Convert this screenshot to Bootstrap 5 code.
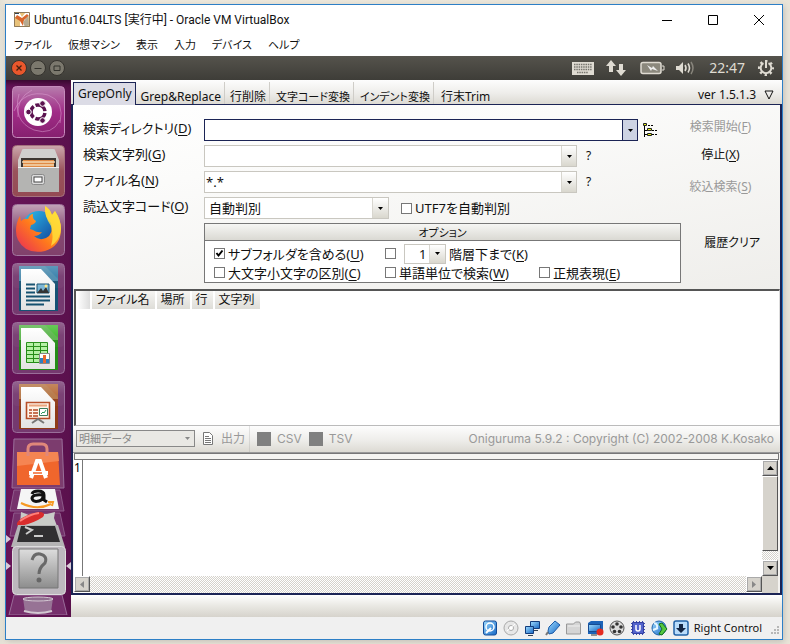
<!DOCTYPE html>
<html lang="ja">
<head>
<meta charset="utf-8">
<meta name="viewport" content="width=device-width, initial-scale=1">
<title>Ubuntu16.04LTS [実行中] - Oracle VM VirtualBox</title>
<link href="https://cdn.jsdelivr.net/npm/bootstrap@5.3.0/dist/css/bootstrap.min.css" rel="stylesheet">
<style>
:root{--navy:#1b2455;--bar:linear-gradient(#fdfdfd,#eeedea 55%,#dcdad3)}
body{background:linear-gradient(90deg,#e4e1d6,#efe9dc 8px,#e9e4d8);color:#111;font:13px/18px "Noto Sans","Noto Sans CJK JP",sans-serif;font-feature-settings:"palt";min-height:100vh;padding:4px 7px 4px 5px}
button,input,select{font:inherit;font-feature-settings:inherit;color:inherit}
button{background:none;border:0;padding:0}
svg{display:block;flex:none}
u{text-underline-offset:2px}
.vm-window{border:1px solid #2d7fc6;background:#fff;box-shadow:1px 2px 6px #8886;flex:1;min-width:0}
.title-bar{height:29px;padding:0 17px 0 8px;font-size:12px;font-family:Roboto,"Noto Sans CJK JP",sans-serif}
.win-controls{gap:34px}
.menu-bar{height:22px;padding:0 8px;gap:16px;font-size:11px}
.menu-bar a{color:#111;text-decoration:none}
.panel-bar{height:24px;background:linear-gradient(#55534c,#3e3d38);color:#dfdbd2;padding:0 7px 0 5px;font-size:14px}
.window-dots{gap:3px}
.launcher{width:65px;padding:6px 0 0;background:#5d1250;background:linear-gradient(90deg,#681458,#5a114d);box-shadow:inset 0 8px 6px -6px #2a0624;gap:7px}
.app-pane{min-width:0;background:#f3f2ef}
.tab-bar{height:25px;background:var(--bar);border-bottom:1px solid var(--navy);font-size:12px;padding-left:2px;padding-top:2px}
.tab-bar button{padding:6px 3px 0 6px;border-right:1px solid #cfcdc8;background-clip:padding-box}
.tab-bar button+button{padding-left:5px}
.tab-bar .kana-tab{font-size:11px;padding-left:6px}
.tab-bar .tab-on{background:#dcdce6;border:1px solid var(--navy);border-bottom:0;padding:2px 3px 2px 4px;margin-bottom:-1px}
.tab-bar button:last-of-type{border:0;padding-left:7px}
.pane-frame{border:solid var(--navy);border-width:0 2px 2px;min-height:0}
.search-form{background:linear-gradient(170deg,#fff,#fbfbfa 30%,#efeeeb);padding:14px 20px 6px 10px}
.form-lines{display:grid;gap:4px;min-width:0}
.line{display:flex;align-items:stretch;height:22px}
.line>label:first-child{width:121px;flex:none;line-height:18px}
.combo{display:flex;flex:1;border:1px solid #c9c7c0;background:#fff;min-width:0}
.combo input{border:0;flex:1;min-width:0;padding:0 1px;outline:0;line-height:16px}
.combo button{width:15px;display:grid;place-items:center;background:linear-gradient(#fff,#d9d7ce);border-left:1px solid #d8d6cf}
.combo.hot{border-color:var(--navy)}
.combo.hot button{background:#cdd3e3;border-color:var(--navy)}
.trail{width:104px;padding-left:9px;align-items:center;font-size:12px}
.trail.slim{width:43px;padding-left:4px}
.pick{appearance:none;border:1px solid #c9c7c0;border-radius:0;background:url("data:image/svg+xml,%3Csvg xmlns='http://www.w3.org/2000/svg' width='5' height='3'%3E%3Cpath d='M0 0h5L2.500 3z'/%3E%3C/svg%3E") right 5px center no-repeat,linear-gradient(90deg,#d8d6cf 1px,transparent 1px) right/16px 100% no-repeat,linear-gradient(#fff,#d9d7ce) right/16px 100% no-repeat,#fff}
.encoding{width:185px;padding:0 4px;line-height:18px}
.depth{width:42px;height:20px;padding:0 0 0 14px;line-height:18px;margin:0 3px 0 8px}
.tick{appearance:none;width:11px;height:11px;border:1px solid #777;background:#fff;margin:0 3px 0 0;flex:none}
.tick:checked{background:#fff url("data:image/svg+xml,%3Csvg xmlns='http://www.w3.org/2000/svg' viewBox='0 0 9 9'%3E%3Cpath d='M1.500 4l2 2.500 4-5' fill='none' stroke='%23000' stroke-width='2'/%3E%3C/svg%3E") center/9px}
.option-box{border:1px solid #777;background:#fff;height:60px;margin-left:121px}
.option-title{height:17px;border-bottom:1px solid #777;background:linear-gradient(#f6f6f4,#dad9d3);text-align:center;font-size:11px;line-height:17px}
.option-grid{display:grid;grid-template-columns:171px 154px 1fr;grid-auto-rows:19px;padding:3px 9px}
.action-col{width:79px;font-size:12px}
.action-col button{line-height:16px}
.action-col button:disabled{color:#999}
.sheet{background:#fff;flex:1 1 0;min-height:120px}
.result-list{border:solid #555;border-width:2px 1px 1px 2px;border-right-color:#ddd;border-bottom-color:#bbb;margin-left:1px}
.result-list table{margin-left:1px;border-collapse:separate;border-spacing:0;font-size:12px}
.result-list th{font-weight:400;background:linear-gradient(#f6f5f3,#deddd8);padding:0 5px 0 4px;border-right:2px solid #fff;line-height:18px;white-space:nowrap}
.result-list th:first-child{width:15px;background:linear-gradient(90deg,#fff,#ddd)}
.export-bar{height:27px;background:var(--bar);color:#999;padding:0 6px 0 3px;border-bottom:1px solid #999;font-size:12px}
.latin-note{font-family:Inter,"Noto Sans",sans-serif}
.detail{width:119px;height:17px;line-height:15px;border:1px solid #888;border-radius:0;appearance:none;padding:0 2px;opacity:1;color:#888!important;background:url("data:image/svg+xml,%3Csvg xmlns='http://www.w3.org/2000/svg' width='5' height='3'%3E%3Cpath d='M0 0h5L2.500 3z' fill='%23888'/%3E%3C/svg%3E") right 4px center no-repeat,#e9e8e4;font-size:11px}
.swatch{appearance:none;width:14px;height:14px;background:#808080;margin:0 6px 0 7px}
.splitter{height:7px;border:1px solid #777;background:#f5f4f1;margin:0 1px}
.editor{margin:0 2px 0 1px;display:grid;grid-template:1fr 17px/9px 1fr 16px}
.gutter{border-right:1px solid #777;font-size:12px;line-height:15px;color:#000}
.editor textarea{border:0;resize:none;outline:0;width:100%;height:100%;padding:0 2px}
.dither{background:conic-gradient(#d5d2cb 25%,#fff 0 50%,#d5d2cb 0 75%,#fff 0) 0 0/2px 2px}
.scroll-btn{width:16px;height:16px;background:#d6d3cc;border:1px solid;border-color:#fff #555 #555 #fff;box-shadow:0 0 0 1px #aaa inset;display:grid;place-items:center;flex:none}
.thumb{background:#d6d3cc;border:1px solid;border-color:#fff #555 #555 #fff;height:75px}
.hscroll{grid-column:1/3}
.scroll-corner{background:#d6d3cc}
.bottom-strip{height:22px;background:linear-gradient(#fff,#e9e8e3 50%,#d6d3cc)}
.status-bar{height:22px;background:#f0f0f0;padding-right:2px;gap:5px;font-size:11px}
.app-stack{margin-top:-2px}
</style>
</head>
<body class="d-flex">
<svg width="0" height="0" class="position-absolute" aria-hidden="true">
<defs>
<linearGradient id="gloss" x2="0" y2="1"><stop stop-color="#fff" stop-opacity=".55"/><stop offset=".5" stop-color="#fff" stop-opacity=".12"/><stop offset="1" stop-color="#fff" stop-opacity=".08"/></linearGradient>
<linearGradient id="steel" x2="0" y2="1"><stop stop-color="#ddd"/><stop offset="1" stop-color="#8d8d8d"/></linearGradient>
<linearGradient id="dash" x2="0" y2="1"><stop stop-color="#b77dad"/><stop offset=".5" stop-color="#a12c87"/><stop offset="1" stop-color="#86206f"/></linearGradient>
<linearGradient id="fire" x1="0" y1="1" x2="1" y2="0"><stop stop-color="#e8285a"/><stop offset=".45" stop-color="#ff7a1c"/><stop offset="1" stop-color="#ffe93a"/></linearGradient>
<linearGradient id="blue" x2="1" y2="1"><stop stop-color="#2cc2f0"/><stop offset="1" stop-color="#123a92"/></linearGradient>
<linearGradient id="page" x2="0" y2="1"><stop stop-color="#fff"/><stop offset="1" stop-color="#e2e2e2"/></linearGradient>
<linearGradient id="vblue" x2="1" y2="1"><stop stop-color="#9fdcff"/><stop offset="1" stop-color="#1466c4"/></linearGradient>
</defs>
</svg>
<div class="vm-window d-flex flex-column">
  <header class="title-bar d-flex align-items-center">
    <svg width="16" height="17" viewBox="0 0 16 17"><path d="M0 1h16v15H0z" fill="#e8c27a"/><path d="M0 1h5l3 5 4-5h4v3l-6 8 1 4H6V9L0 5z" fill="#fff"/><path d="M3 4l5 3 5-4 2 2-5 4-1 6-3-5-5-3z" fill="#d9652a"/><path d="M0 1h5v2H0z" fill="#345"/><path d="M9 11l5-6 1 9-4 2z" fill="#b5aa92"/><path d="M.5 1.500h15v14H.5z" fill="none" stroke="#8f7a5a"/></svg>
    <span class="ps-1 flex-grow-1">Ubuntu16.04LTS [実行中] - Oracle VM VirtualBox</span>
    <span class="win-controls d-flex">
      <button aria-label="最小化"><svg width="12" height="12"><path d="M1 6.500h10" stroke="#000"/></svg></button>
      <button aria-label="最大化"><svg width="12" height="12"><path d="M1.500 1.500h9v9h-9z" fill="none" stroke="#000"/></svg></button>
      <button aria-label="閉じる"><svg width="12" height="12"><path d="M1 1l10 10M11 1L1 11" stroke="#000"/></svg></button>
    </span>
  </header>
  <nav class="menu-bar d-flex align-items-center"><a href="#">ファイル</a><a href="#">仮想マシン</a><a href="#">表示</a><a href="#">入力</a><a href="#">デバイス</a><a href="#">ヘルプ</a></nav>
  <div class="panel-bar d-flex align-items-center">
    <div class="window-dots d-flex flex-grow-1">
      <button aria-label="閉じる"><svg width="16" height="16"><circle cx="8" cy="8" r="7.500" fill="#e9572c" stroke="#35332e"/><path d="M5.500 5.500l5 5m0-5l-5 5" stroke="#46200f" stroke-width="1.300"/></svg></button>
      <button aria-label="最小化"><svg width="16" height="16"><circle cx="8" cy="8" r="7.500" fill="#7b786d" stroke="#35332e"/><path d="M4.500 8.500h7" stroke="#33322d"/></svg></button>
      <button aria-label="最大化"><svg width="16" height="16"><circle cx="8" cy="8" r="7.500" fill="#7b786d" stroke="#35332e"/><path d="M5 6h6v4.500H5z" fill="none" stroke="#33322d"/></svg></button>
    </div>
    <svg width="22" height="13"><path d="M0 0h22v13H0z" fill="#dfdbd2"/><path d="M2 2.500h18M2 5h18M2 7.500h18M5 10.500h11" stroke="#77756e" stroke-width="1.500" stroke-dasharray="1.500 .8"/></svg>
    <svg class="ms-2 me-2" width="26" height="18" viewBox="0 0 26 18"><path d="M5 1l5 6H7v6H3V7H0zM15 17l-5-6h3V5h4v6h3z" transform="translate(4)" fill="#dfdbd2"/></svg>
    <svg class="ms-1" width="25" height="14"><rect x="1" y="1.500" width="20" height="11" rx="2" fill="#8b887d" stroke="#dfdbd2" stroke-width="1.500"/><path d="M22 5h2v4h-2" fill="none" stroke="#dfdbd2"/><path d="M7 4l5 3 1-2 5 5-6-2-1 2z" fill="#eee"/></svg>
    <svg class="ms-2" width="24" height="16"><path d="M3 6h3l4-4v12l-4-4H3z" fill="#dfdbd2"/><path d="M12 5q2 3 0 6M15 3.500q3 4.500 0 9" fill="none" stroke="#dfdbd2" stroke-width="1.600"/><path d="M18 2q4 6 0 12" fill="none" stroke="#88857c" stroke-width="1.500"/></svg>
    <span class="ms-2 me-2 ps-1 pe-1">22:47</span>
    <svg width="18" height="18" viewBox="-9 -9 18 18"><circle r="6.800" fill="none" stroke="#dfdbd2" stroke-width="2.500" stroke-dasharray="2.300 3.040" stroke-dashoffset="1"/><path d="M-2.500-4.800a5.300 5.300 0 1 0 5 0" fill="none" stroke="#dfdbd2" stroke-width="2"/><path d="M0-8V0" stroke="#dfdbd2" stroke-width="2"/></svg>
  </div>
  <div class="d-flex flex-grow-1">
    <aside class="launcher d-flex flex-column align-items-center flex-shrink-0" aria-label="ランチャー">
      <svg width="53" height="52"><rect x=".5" y=".5" width="52" height="51" rx="4" fill="url(#dash)" stroke="#c58bbb"/><path d="M2 25Q12 3 36 9q17 6 12 28M7 8q-7 27 15 36 18 6 26-10M20 4Q4 12 6 31" fill="none" stroke="#e0a5d5" opacity=".5"/><circle cx="26" cy="26" r="14" fill="#fff"/><circle cx="26" cy="26" r="7" fill="none" stroke="#5c1350" stroke-width="3.500" stroke-dasharray="12.600 2" stroke-dashoffset="-1"/><g fill="#5c1350" stroke="#fff"><circle cx="16.500" cy="26" r="2.800"/><circle cx="30.500" cy="17.500" r="2.800"/><circle cx="30.500" cy="34.500" r="2.800"/></g></svg>
      <svg width="53" height="52"><rect x=".5" y=".5" width="52" height="51" rx="4" fill="#8b3b45" stroke="#a5727e"/><rect x="1" y="1" width="51" height="50" rx="4" fill="url(#gloss)"/><path d="M10 5q0-1 2-1h29q2 0 2 1l4 10v32H6V15z" fill="#d0d0ce"/><path d="M9 13h35v9H9z" fill="#3d3732"/><path d="M11 15h31v7H11z" fill="#e08a45"/><path d="M10 17h33M11 20h31" stroke="#f3d9b2" stroke-width="1.500"/><path d="M6 22h41v25H6z" fill="#b4b4b2"/><path d="M6 22.500h41" stroke="#eee"/><rect x="19.500" y="29.500" width="13" height="10" rx="2" fill="#ddd" stroke="#888"/><rect x="22" y="32" width="8" height="5" fill="#fff" stroke="#444"/></svg>
      <svg width="53" height="52"><rect x=".5" y=".5" width="52" height="51" rx="4" fill="#76305f" stroke="#a277a0"/><rect x="1" y="1" width="51" height="50" rx="4" fill="url(#gloss)"/><circle cx="27" cy="24" r="17" fill="url(#blue)"/><path d="M4 27q0-9 4-15l1 5q3-3 7-2 2-5 5-5-1 5 3 7-1 3-5 4l-1 4 3 1q4 3 9 2-3 4-8 4 5 5 12 2 8-4 5-15Q32 13 33 2q5 3 7 9l3-4q6 9 6 18 0 17-16 22-19 4-27-11-2-4-2-9z" fill="url(#fire)"/><path d="M33 2q5 3 7 9l3-4q6 9 6 18-1 11-10 17 3-9 0-20-7-10-6-20z" fill="#ffe13a" opacity=".8"/></svg>
      <svg width="53" height="52"><rect x=".5" y=".5" width="52" height="51" rx="4" fill="#75396f" stroke="#9a6e9a"/><path d="M7 3h39v45H7z" fill="#155274"/><path d="M7 3h39v15H7z" fill="#4b8bae"/><path d="M9 6h20l14 15v26H9z" fill="url(#page)"/><path d="M33 3h13v13z" fill="#3780ab"/><path d="M14 21.500h9M14 25.500h9M14 29.500h9M14 33.500h24M14 37.500h24M14 41.500h18" stroke="#14506f" stroke-width="2"/><path d="M25 21h12v9H25z" fill="#79b5d6" stroke="#14506f"/><path d="M25 30l4-5 2 3 3-4 3 6z" fill="#333"/><circle cx="34" cy="23" r="1.500" fill="#ffe680"/><rect x="1" y="1" width="51" height="24" rx="4" fill="url(#gloss)" opacity=".4"/></svg>
      <svg width="53" height="52"><rect x=".5" y=".5" width="52" height="51" rx="4" fill="#75396f" stroke="#9a6e9a"/><path d="M7 3h39v45H7z" fill="#248c16"/><path d="M7 3h39v15H7z" fill="#5ab54b"/><path d="M9 6h20l14 15v26H9z" fill="url(#page)"/><path d="M33 3h13v13z" fill="#44bb31"/><path d="M14.500 20.500h21v20h-21zM14 24.500h22M14 28.500h22M14 32.500h22M14 36.500h22M21.500 20v21M28.500 20v21" fill="#b4f0a4" stroke="#248c16"/><path d="M27.500 31.500h10v10h-10z" fill="#fff" stroke="#888"/><path d="M28 36h3v5h-3z" fill="#2d80c2"/><path d="M31 33h3v8h-3z" fill="#e9682d"/><path d="M34 37h3v4h-3z" fill="#2d80c2"/><rect x="1" y="1" width="51" height="24" rx="4" fill="url(#gloss)" opacity=".4"/></svg>
      <svg width="53" height="52"><rect x=".5" y=".5" width="52" height="51" rx="4" fill="#75396f" stroke="#9a6e9a"/><path d="M7 3h39v45H7z" fill="#8f3b17"/><path d="M7 3h39v15H7z" fill="#b57645"/><path d="M9 6h20l14 15v26H9z" fill="url(#page)"/><path d="M33 3h13v13z" fill="#b76b38"/><path d="M14.500 21.500h23v16h-23z" fill="#fff4e8" stroke="#b54a22" stroke-width="1.600"/><path d="M17 24.500h18" stroke="#e9a37a" stroke-width="2"/><path d="M17 29h3M17 32h3M17 35h3M21 29h5M21 32h5M21 35h5" stroke="#b54a22" stroke-width="1.500"/><path d="M27.500 27.500h8v7h-8z" fill="#fff" stroke="#3b7b5b"/><path d="M29 33l2-2 1 1 2-3" fill="none" stroke="#2c9b5c"/><path d="M20 42l6-4 6 4" fill="none" stroke="#777" stroke-width="2"/><rect x="1" y="1" width="51" height="24" rx="4" fill="url(#gloss)" opacity=".4"/></svg>
      <svg class="app-stack" width="65" height="177" viewBox="0 0 65 177"><g stroke="#9a6e9a">
        <path d="M8 1h48l2 49H6z" fill="#7c3c6e"/><path d="M8 52h46l4 21H4zM8 75h46l5 23H4z" fill="#7a3a72" opacity=".8"/><path d="M8 157h48l5 20H3z" fill="#76306c"/></g>
        <path d="M11 14h41l2 33H11z" fill="#f0662c"/><path d="M11 14h41l1 9-42 5z" fill="#f58552"/><path d="M22 18v-7q0-5 5-5h9q5 0 5 5v7" fill="none" stroke="#e0877a" stroke-width="3"/><path d="M25 40l6-17h3l6 17M23 35h19" fill="none" stroke="#fff" stroke-width="4"/><path d="M27 35h9" stroke="#f0662c" stroke-width="1.500"/>
        <path d="M15 51h34l4 20H11z" fill="#f5f5f5"/><path d="M26 56q1-3 6-3 6 0 6 4v5l3 2M37 57q-11-1-11 3.500 1 4 7 2.500 4-1 4-5" fill="none" stroke="#111" stroke-width="3"/><path d="M15 65q16 8 30 1M42 64l5 0-1 4" fill="none" stroke="#f79a24" stroke-width="2"/>
        <path d="M15 74l8 3 5-1h13l8-2-1 6 3 8-3 3H18l-4-5z" fill="#c9cbc8"/><path d="M11 87q-1-3 5-7 10-6 19-6 5 1 2 5-9 6-22 9-4 0-4-1z" fill="#d92d2d"/><path d="M14 83q10-7 19-8" fill="none" stroke="#ff807a" stroke-width="2"/>
        <path d="M12 87h40l7 22H5z" fill="#b4b3b4"/><path d="M15 88h34l5 16H11z" fill="#302f31"/><path d="M19 89l7 3-6 4M28 98h9" fill="none" stroke="#ccc" stroke-width="2"/>
        <rect x="6.500" y="108.500" width="53" height="48" rx="4" fill="#bdb8be" stroke="#ddd"/><path d="M13 111h39v39H13z" fill="url(#steel)" stroke="#777"/><path d="M26 122q2-7 8-6 8 2 5 9-6 5-6 11" fill="none" stroke="#696969" stroke-width="3"/><circle cx="33" cy="142" r="2.500" fill="#666"/>
        <path d="M17 160h30l-2 14H19z" fill="#a590a6" opacity=".7"/><ellipse cx="32" cy="161" rx="15" ry="2" fill="#8e6f8e" stroke="#d3c8d2"/><path d="M18 173q14 4 28 0" fill="none" stroke="#d3c8d2" stroke-width="2"/><path d="M0 97l5 4-5 4zM0 124l5 4-5 4zM65 124l-5 4 5 4z" fill="#d9cbd8"/></svg>
    </aside>
    <main class="app-pane d-flex flex-column flex-grow-1">
      <div class="tab-bar d-flex">
        <button class="tab-on">GrepOnly</button><button>Grep&amp;Replace</button><button>行削除</button><button class="kana-tab">文字コード変換</button><button class="kana-tab">インデント変換</button><button>行末Trim</button>
        <span class="ms-auto me-2 pt-1 d-flex gap-2">ver 1.5.1.3 <svg class="mt-1" width="10" height="10"><path d="M1 1h8L5 9z" fill="none" stroke="#111"/></svg></span>
      </div>
      <div class="pane-frame d-flex flex-column flex-grow-1">
        <form class="search-form d-flex">
          <div class="form-lines flex-grow-1">
            <div class="line"><label for="dir">検索ディレクトリ(<u>D</u>)</label><div class="combo hot"><input id="dir"><button type="button" aria-label="履歴"><svg width="5" height="3"><path d="M0 0h5L2.500 3z"/></svg></button></div>
              <div class="trail slim d-flex"><button type="button" aria-label="参照"><svg width="16" height="16"><path d="M2.500 3v12M3 8.500h3M3 12.500h3" stroke="#000"/><path d="M6 3.500h6M10 8.500h6M10 12.500h6" stroke="#000" stroke-dasharray="2 1"/><g fill="#e5f21a" stroke="#222"><path d="M1.500 1.500h3v2h-3zM5.500 6.500h4v2h-4zM5.500 11.500h4v2h-4z"/></g></svg></button></div></div>
            <div class="line"><label for="pat">検索文字列(<u>G</u>)</label><div class="combo"><input id="pat"><button type="button" aria-label="履歴"><svg width="5" height="3"><path d="M0 0h5L2.500 3z"/></svg></button></div><div class="trail d-flex"><button type="button">?</button></div></div>
            <div class="line"><label for="fname">ファイル名(<u>N</u>)</label><div class="combo"><input id="fname" value="*.*"><button type="button" aria-label="履歴"><svg width="5" height="3"><path d="M0 0h5L2.500 3z"/></svg></button></div><div class="trail d-flex"><button type="button">?</button></div></div>
            <div class="line"><label for="enc">読込文字コード(<u>O</u>)</label><select id="enc" class="pick encoding"><option>自動判別</option></select><label class="d-flex align-items-center ps-2 ms-1"><input type="checkbox" class="tick">UTF7を自動判別</label></div>
            <div class="option-box">
              <div class="option-title">オプション</div>
              <div class="option-grid">
                <label class="d-flex align-items-center"><input class="tick" type="checkbox" checked><span>サブフォルダを含める(<u>U</u>)</span></label>
                <div class="d-flex align-items-center text-nowrap"><input class="tick me-0" type="checkbox" id="lv"><select class="pick depth" aria-label="階層"><option>1</option></select><label for="lv">階層下まで(<u>K</u>)</label></div><span></span>
                <label class="d-flex align-items-center"><input class="tick" type="checkbox"><span>大文字小文字の区別(<u>C</u>)</span></label>
                <label class="d-flex align-items-center"><input class="tick" type="checkbox"><span>単語単位で検索(<u>W</u>)</span></label>
                <label class="d-flex align-items-center"><input class="tick" type="checkbox"><span>正規表現(<u>E</u>)</span></label>
              </div>
            </div>
          </div>
          <div class="action-col d-flex flex-column align-items-center">
            <button type="button" disabled>検索開始(<u>F</u>)</button><button type="button" class="mt-2 pt-1">停止(<u>X</u>)</button><button type="button" class="mt-3" disabled>絞込検索(<u>S</u>)</button><button type="button" class="mt-auto mb-4 pb-2 align-self-end">履歴クリア</button>
          </div>
        </form>
        <section class="sheet result-list"><table><thead><tr><th></th><th>ファイル名</th><th>場所</th><th>行</th><th>文字列</th></tr></thead></table></section>
        <div class="export-bar d-flex align-items-center">
          <select class="detail" disabled aria-label="データ"><option>明細データ</option></select>
          <svg class="ms-2" width="10" height="13"><path d="M.5.5h6l3 3v9h-9z" fill="#fff" stroke="#777"/><path d="M2 4.500h4M2 6.500h6M2 8.500h6M2 10.500h6" stroke="#777"/></svg>
          <button class="ms-2" disabled>出力</button><span class="vr ms-1"></span>
          <label class="latin-note d-flex align-items-center"><input type="checkbox" class="swatch" disabled>CSV</label><label class="latin-note d-flex align-items-center"><input type="checkbox" class="swatch" disabled>TSV</label>
          <span class="latin-note ms-auto">Oniguruma 5.9.2 : Copyright (C) 2002-2008 K.Kosako</span>
        </div>
        <div class="splitter"></div>
        <section class="sheet editor">
          <div class="gutter">1</div><textarea aria-label="結果"></textarea>
          <div class="d-flex flex-column"><button class="scroll-btn" aria-label="上"><svg width="7" height="4"><path d="M0 4h7L3.500 0z"/></svg></button><div class="thumb"></div><div class="dither flex-grow-1"></div><button class="scroll-btn" aria-label="下"><svg width="7" height="4"><path d="M0 0h7L3.500 4z"/></svg></button></div>
          <div class="hscroll d-flex"><button class="scroll-btn" aria-label="左"><svg width="4" height="7"><path d="M4 0v7L0 3.500z" fill="#888"/></svg></button><div class="dither flex-grow-1"></div><button class="scroll-btn" aria-label="右"><svg width="4" height="7"><path d="M0 0v7l4-3.500z" fill="#888"/></svg></button></div>
          <div class="scroll-corner"></div>
        </section>
      </div>
      <div class="bottom-strip"></div>
    </main>
  </div>
  <footer class="status-bar d-flex align-items-center justify-content-end">
    <svg width="16" height="16"><rect x="1.500" y="1" width="13" height="14" rx="2" fill="url(#vblue)" stroke="#124a97"/><ellipse cx="8" cy="7" rx="4" ry="4" fill="none" stroke="#fff" stroke-width="1.500"/><path d="M4 13l5-5" stroke="#fff" stroke-width="2"/></svg>
    <svg width="16" height="16"><circle cx="8" cy="8" r="7" fill="#e7e7e7" stroke="#aaa"/><circle cx="8" cy="8" r="2.500" fill="#fff" stroke="#aaa"/><path d="M4 11L12 4" stroke="#fff"/></svg>
    <svg width="16" height="16"><g fill="url(#vblue)" stroke="#123c7c"><path d="M6.500 1.500h9v7h-9z"/><path d="M1.500 6.500h8v7h-8z"/></g><path d="M4 15.500h5M10 10.500h4" stroke="#345"/></svg>
    <svg width="16" height="16"><path d="M4 7l6-6 5 4-7 8-4 1-1-3z" fill="url(#vblue)" stroke="#1a5aa6"/><path d="M3 12l-2 3" stroke="#777" stroke-width="2"/></svg>
    <svg width="16" height="16"><path d="M.5 14V4h7l2-2h4l1 2v10z" fill="#d5d5d5" stroke="#999"/><path d="M2 6h12" stroke="#eee"/></svg>
    <svg width="17" height="16"><path d="M1 3l3-2h12v10l-3 3H1z" fill="#1c63b8"/><path d="M1.500 4.500h12v7h-12z" fill="url(#vblue)" stroke="#164b91"/><path d="M4 15h6" stroke="#333"/><circle cx="13" cy="12" r="3.500" fill="#e52b20"/></svg>
    <svg width="16" height="16"><circle cx="8" cy="8" r="7" fill="#ddd" stroke="#555"/><g fill="#333"><circle cx="8" cy="4" r="1.800"/><circle cx="4" cy="7" r="1.800"/><circle cx="12" cy="7" r="1.800"/><circle cx="5.500" cy="11.500" r="1.800"/><circle cx="10.500" cy="11.500" r="1.800"/></g></svg>
    <svg width="16" height="16"><path d="M1 3.500h14M1 6.500h14M1 9.500h14M1 12.500h14M3.500 1v14M6.500 1v14M9.500 1v14M12.500 1v14" stroke="#3b4bb2"/><path d="M2.500 2.500h11v11h-11z" fill="#5263cc" stroke="#3441a0"/><path d="M6 5v4q0 2 2 2t2-2V5" fill="none" stroke="#fff" stroke-width="1.500"/></svg>
    <svg width="17" height="16"><circle cx="8" cy="8" r="7" fill="url(#vblue)" stroke="#1b5fa9"/><path d="M3 3q4 1 3 5M2 10l5-2" fill="none" stroke="#e5f5ff" stroke-width="2"/><path d="M8 4l3-1 5 6-5 6-3-1 3-5z" fill="#55c83f" stroke="#146f1b"/></svg>
    <svg width="16" height="16"><rect x="1" y="1" width="14" height="14" rx="2" fill="#b9dcfb" stroke="#2261a6" stroke-width="1.500"/><path d="M6 4h4v4h3l-5 5-5-5h3z" fill="#142644"/></svg>
    <span>Right Control</span>
    <svg class="align-self-end mb-1 ms-1" width="9" height="9"><path d="M6 0h2v2H6zM3 3h2v2H3zM6 3h2v2H6zM0 6h2v2H0zM3 6h2v2H3zM6 6h2v2H6z" fill="#b7b7b7"/></svg>
  </footer>
</div>
<script src="https://cdn.jsdelivr.net/npm/bootstrap@5.3.0/dist/js/bootstrap.bundle.min.js"></script>
</body>
</html>
